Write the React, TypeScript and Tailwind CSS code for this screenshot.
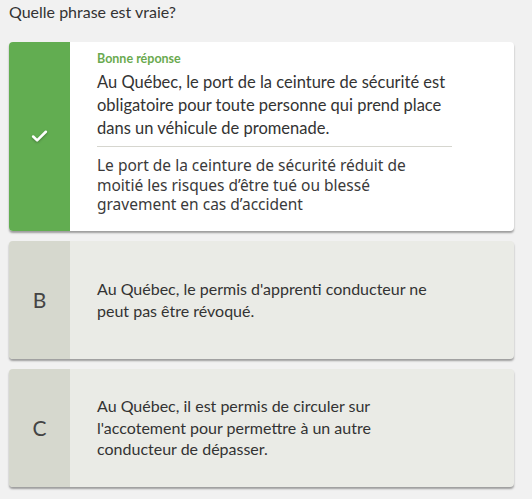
import { Check } from "lucide-react";

const options = [
  {
    letter: "B",
    text: "Au Québec, le permis d'apprenti conducteur ne peut pas être révoqué.",
  },
  {
    letter: "C",
    text: "Au Québec, il est permis de circuler sur l'accotement pour permettre à un autre conducteur de dépasser.",
  },
];

export default function App() {
  return (
    <div className="min-h-screen bg-[#f1f1f1] px-[9px] pt-[2px] pb-4 text-[#333] font-['Lato',sans-serif]">
      <h1 className="text-[16px] leading-5 mb-[20px]">Quelle phrase est vraie?</h1>

      <div className="flex flex-col gap-[10px] w-[505px]">
        {/* Good answer */}
        <div className="flex rounded overflow-hidden bg-white shadow-[0_2px_2px_rgba(0,0,0,0.35)]">
          <div className="w-[61px] shrink-0 bg-[#62ad51] flex items-center justify-center">
            <Check className="w-[19px] h-[19px] text-white drop-shadow-[0_1px_1px_rgba(0,0,0,0.3)]" strokeWidth={3.2} />
          </div>
          <div className="pl-[27px] pt-[9px] pb-4 w-[355px] box-content">
            <p className="text-[12.5px] leading-4 font-bold text-[#6aaa4f]">Bonne réponse</p>
            <p className="mt-[4px] text-[16.5px] leading-[23px]">
              Au Québec, le port de la ceinture de sécurité est obligatoire pour toute personne qui prend place dans un véhicule de promenade.
            </p>
            <div className="h-px bg-[#d6d6cf] mt-[6px] mb-[9px]" />
            <p className="text-[15.5px] leading-[19.5px] font-['Noto_Sans',sans-serif] text-[#3a3a3a]">
              Le port de la ceinture de sécurité réduit de moitié les risques d’être tué ou blessé gravement en cas d’accident
            </p>
          </div>
        </div>

        {options.map((o) => (
          <div
            key={o.letter}
            className="flex min-h-[118px] rounded overflow-hidden bg-[#eaebe6] shadow-[0_2px_2px_rgba(0,0,0,0.35)]"
          >
            <div className="w-[61px] shrink-0 bg-[#d6d8ce] flex items-center justify-center text-[21px] text-[#444]">
              {o.letter}
            </div>
            <div className="pl-[27px] w-[355px] box-content flex items-center">
              <p className="text-[16px] leading-[21.5px]">{o.text}</p>
            </div>
          </div>
        ))}
      </div>
    </div>
  );
}
